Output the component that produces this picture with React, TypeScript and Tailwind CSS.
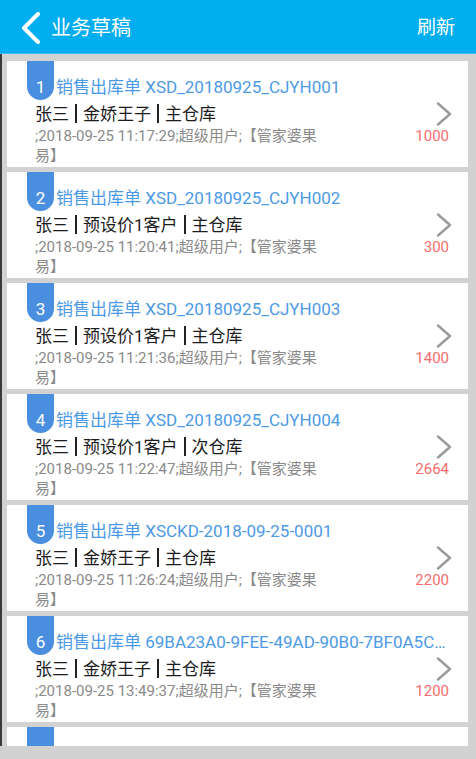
import { Fragment } from "react";

type Draft = {
  no: string;
  customer: string;
  warehouse: string;
  time: string;
  amount: string;
};

const DRAFTS: Draft[] = [
  { no: "XSD_20180925_CJYH001", customer: "金娇王子", warehouse: "主仓库", time: "2018-09-25 11:17:29", amount: "1000" },
  { no: "XSD_20180925_CJYH002", customer: "预设价1客户", warehouse: "主仓库", time: "2018-09-25 11:20:41", amount: "300" },
  { no: "XSD_20180925_CJYH003", customer: "预设价1客户", warehouse: "主仓库", time: "2018-09-25 11:21:36", amount: "1400" },
  { no: "XSD_20180925_CJYH004", customer: "预设价1客户", warehouse: "次仓库", time: "2018-09-25 11:22:47", amount: "2664" },
  { no: "XSCKD-2018-09-25-0001", customer: "金娇王子", warehouse: "主仓库", time: "2018-09-25 11:26:24", amount: "2200" },
  { no: "69BA23A0-9FEE-49AD-90B0-7BF0A5C1E2D4", customer: "金娇王子", warehouse: "主仓库", time: "2018-09-25 13:49:37", amount: "1200" },
];

function Bar() {
  return <span className="mx-[6px] inline-block h-[19px] w-[2px] bg-[#222] align-[-3px]" />;
}

function Badge({ children }: { children?: React.ReactNode }) {
  return (
    <div className="flex h-[39px] w-[27px] shrink-0 justify-center rounded-b-[14px] bg-[#4a8ee0] pt-[14px] text-[17px] leading-[24px] text-white">
      {children}
    </div>
  );
}

function DraftCard({ index, draft }: { index: number; draft: Draft }) {
  return (
    <div className="flex h-[106px] shrink-0 flex-col bg-white">
      {/* badge + title */}
      <div className="flex pl-[20px] pr-[20px]">
        <Badge>{index}</Badge>
        <p className="ml-[2px] min-w-0 flex-1 truncate pt-[14px] text-[17px] leading-[24px] text-[#4c9ae6]">
          销售出库单 {draft.no}
        </p>
      </div>

      <div className="mt-[2px] flex">
        <div className="min-w-0 flex-1 pl-[28px]">
          <p className="text-[17px] leading-[24px] text-[#1c1c1c]">
            张三<Bar />{draft.customer}<Bar />{draft.warehouse}
          </p>
          <p className="text-[15px] leading-[20px] text-[#8a8a8a]">
            ;{draft.time};超级用户;【管家婆果
            <br />
            易】
          </p>
        </div>
        <div className="flex flex-col items-end pr-[19px]">
          <svg className="-mr-[3px] h-[24px] w-[16px]" viewBox="0 0 16 24" fill="none">
            <polyline
              points="2,1.5 14,12 2,22.5"
              stroke="#9a9a9a"
              strokeWidth={2.4}
              strokeLinecap="round"
              strokeLinejoin="round"
            />
          </svg>
          <span className="text-[15px] leading-[20px] text-[#f76d6d]">{draft.amount}</span>
        </div>
      </div>
    </div>
  );
}

export default function App() {
  return (
    <div
      className="flex h-[759px] w-[476px] flex-col overflow-hidden bg-[#d2d2d2]"
      style={{ fontFamily: 'Roboto, "Noto Sans CJK SC", sans-serif' }}
    >
      {/* Header */}
      <div className="flex h-[54px] shrink-0 items-center border-b border-[#3fc0f3] bg-[#00adef] pt-[2px] text-white">
        <svg className="ml-[20px] h-[32px] w-[22px]" viewBox="0 0 22 32" fill="none">
          <polyline
            points="18,2 4,16 18,30"
            stroke="white"
            strokeWidth={4}
            strokeLinecap="round"
            strokeLinejoin="round"
          />
        </svg>
        <h1 className="ml-[9px] text-[20px] leading-[28px]">业务草稿</h1>
        <button className="ml-auto mr-[21px] text-[19px] leading-[28px]">刷新</button>
      </div>

      {/* Draft list */}
      <div className="flex h-[692px] shrink-0 flex-col gap-[5px] overflow-hidden border-l-2 border-[#3a3a3a] pl-[5px] pr-[8px] pt-[7px]">
        {DRAFTS.map((d, i) => (
          <Fragment key={d.no}>
            <DraftCard index={i + 1} draft={d} />
          </Fragment>
        ))}
        {/* next card, only its top edge is in view */}
        <div className="flex h-[106px] shrink-0 bg-white pl-[20px]">
          <Badge />
        </div>
      </div>
    </div>
  );
}
